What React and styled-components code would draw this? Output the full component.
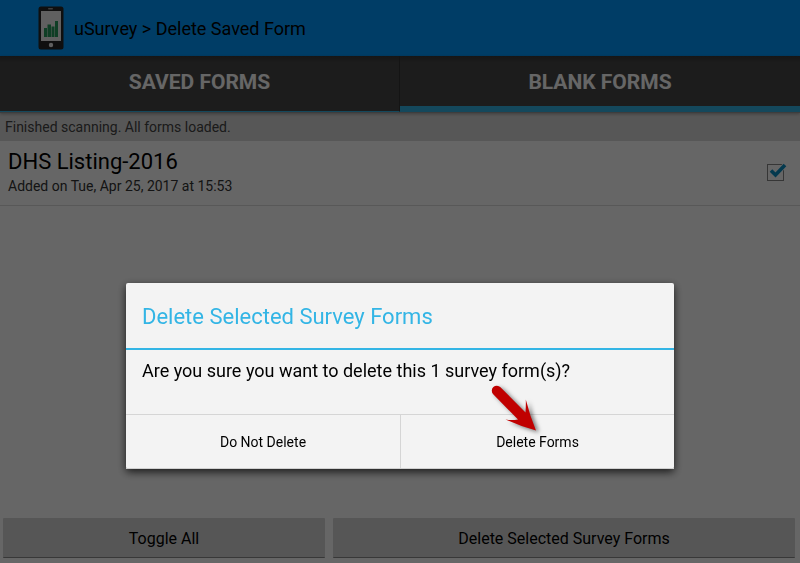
import React, { useState } from "react";
import styled, { createGlobalStyle } from "styled-components";

const GlobalStyle = createGlobalStyle`
  *, *::before, *::after { box-sizing: border-box; }
  body {
    margin: 0;
    background: #fff;
    color: #000;
    font-family: Roboto, "Liberation Sans", sans-serif;
  }
  button { font-family: inherit; color: inherit; cursor: pointer; }
`;

const Screen = styled.div`
  min-height: 100vh;
  display: flex;
  flex-direction: column;
`;

const ActionBar = styled.header`
  display: flex;
  align-items: center;
  gap: 10px;
  height: 56px;
  padding-left: 38px;
  background: #0099ff;
`;

const ScreenTitle = styled.h1`
  margin: 0;
  padding-top: 2px;
  font-size: 18px;
  line-height: 24px;
  font-weight: 400;
`;

const TabBar = styled.div`
  position: relative;
  display: grid;
  grid-template-columns: 1fr 1fr;
  height: 57px;
  background: linear-gradient(#383838, #464646 6px);
  border-bottom: 1px solid #999;
  box-shadow: 0 1px 3px rgba(0, 0, 0, 0.3);
`;

const Tab = styled.button`
  border: 0;
  border-bottom: ${(p) => (p.$active ? "6px" : "1px")} solid #33b5e5;
  border-right: ${(p) => (p.$active ? "0" : "1px solid #333")};
  padding: ${(p) => (p.$active ? "2px 0 0" : "2px 0 5px")};
  background: transparent;
  color: #fff;
  font-size: 21px;
  line-height: 26px;
  font-weight: 700;
`;

const Status = styled.p`
  margin: 0;
  padding: 4px 5px;
  background: #dadada;
  color: #444;
  font-size: 14px;
  line-height: 20px;
`;

const FormRow = styled.label`
  display: flex;
  align-items: center;
  justify-content: space-between;
  padding: 7px 11px 9px 8px;
  border-bottom: 1px solid #ddd;
`;

const FormName = styled.div`
  font-size: 22px;
  line-height: 28px;
`;

const FormDate = styled.div`
  color: #333;
  font-size: 14px;
  line-height: 20px;
`;

const CheckHolder = styled.span`
  position: relative;
  display: block;
  width: 22px;
  height: 18px;
`;

const CheckInput = styled.input`
  appearance: none;
  display: block;
  width: 17px;
  height: 17px;
  margin: 1px 0 0;
  border: 1px solid #888;
`;

const CheckMark = styled.svg`
  position: absolute;
  inset: 0;
  pointer-events: none;
`;

const Footer = styled.footer`
  display: grid;
  grid-template-columns: 322fr 462fr;
  gap: 8px;
  margin-top: auto;
  padding: 0 5px 5px 3px;
`;

const FooterButton = styled.button`
  height: 40px;
  padding: 2px 0 0;
  border: 0;
  border-bottom: 1px solid #8c8c8c;
  border-radius: 1px;
  background: #d8d8d8;
  font-size: 16px;
  line-height: 20px;
`;

const Scrim = styled.div`
  position: fixed;
  inset: 0;
  display: flex;
  align-items: flex-end;
  justify-content: center;
  padding: 0 16px 94px;
  background: rgba(0, 0, 0, 0.6);
`;

const Dialog = styled.section`
  position: relative;
  width: 100%;
  max-width: 548px;
  border-radius: 2px;
  background: #f3f3f3;
  box-shadow: 0 3px 9px rgba(0, 0, 0, 0.75);
`;

const DialogTitle = styled.h2`
  margin: 0;
  padding: 20px 16px 17px;
  border-bottom: 2px solid #33b5e5;
  color: #33b5e5;
  font-size: 22px;
  line-height: 28px;
  font-weight: 400;
`;

const DialogText = styled.p`
  margin: 0;
  padding: 9px 16px 31px;
  font-size: 18px;
  line-height: 24px;
`;

const DialogActions = styled.div`
  display: grid;
  grid-template-columns: 1fr 1fr;
  border-top: 1px solid #d5d5d5;
  border-bottom: 1px solid #d0d0d0;
`;

const DialogButton = styled.button`
  height: 53px;
  padding: 0;
  border: 0;
  background: transparent;
  font-size: 14px;
  line-height: 20px;

  & + & { border-left: 1px solid #d5d5d5; }
`;

const Pointer = styled.svg`
  position: absolute;
  right: 130px;
  top: 98px;
  overflow: visible;
  pointer-events: none;
  filter: drop-shadow(3px 2px 2px rgba(0, 0, 0, 0.5));
`;

function PhoneLogo() {
  return (
    <svg width="26" height="44" viewBox="0 0 26 44" aria-hidden="true">
      <rect x="0.5" y="0.5" width="25" height="43" rx="2.5" fill="#262626" />
      <rect x="10" y="2" width="5" height="1.5" rx="0.7" fill="#999" />
      <rect x="3" y="5" width="20" height="30" fill="#f0f0f0" />
      <path d="M6 22h3v9H6zM9.5 18.500h3.500V31H9.500zM13.500 20.500h3V31h-3zM17 15h3v16h-3z" fill="#279b5c" />
      <circle cx="13" cy="39" r="2.200" fill="#eee" />
    </svg>
  );
}

export default function App() {
  const [checked, setChecked] = useState(true);
  const [open, setOpen] = useState(true);
  const [tab, setTab] = useState("blank");

  return (
    <>
      <GlobalStyle />
      <Screen>
        <ActionBar>
          <PhoneLogo />
          <ScreenTitle>uSurvey &gt; Delete Saved Form</ScreenTitle>
        </ActionBar>
        <TabBar role="tablist">
          <Tab role="tab" aria-selected={tab === "saved"} $active={tab === "saved"} onClick={() => setTab("saved")}>
            SAVED FORMS
          </Tab>
          <Tab role="tab" aria-selected={tab === "blank"} $active={tab === "blank"} onClick={() => setTab("blank")}>
            BLANK FORMS
          </Tab>
        </TabBar>
        <Status>Finished scanning. All forms loaded.</Status>
        <FormRow>
          <div>
            <FormName>DHS Listing-2016</FormName>
            <FormDate>Added on Tue, Apr 25, 2017 at 15:53</FormDate>
          </div>
          <CheckHolder>
            <CheckInput type="checkbox" checked={checked} onChange={(e) => setChecked(e.target.checked)} />
            {checked && (
              <CheckMark width="22" height="18" viewBox="0 0 22 18" aria-hidden="true">
                <path d="M4 7.500L8.500 12L18 2" fill="none" stroke="#fff" strokeWidth="5" />
                <path d="M4 7.500L8.500 12L18 2" fill="none" stroke="#0a8fc4" strokeWidth="3.600" />
              </CheckMark>
            )}
          </CheckHolder>
        </FormRow>
        <Footer>
          <FooterButton onClick={() => setChecked(!checked)}>Toggle All</FooterButton>
          <FooterButton onClick={() => setOpen(true)}>Delete Selected Survey Forms</FooterButton>
        </Footer>
      </Screen>
      {open && (
        <Scrim>
          <Dialog role="dialog" aria-modal="true" aria-labelledby="dialog-title">
            <DialogTitle id="dialog-title">Delete Selected Survey Forms</DialogTitle>
            <DialogText>Are you sure you want to delete this 1 survey form(s)?</DialogText>
            <DialogActions>
              <DialogButton onClick={() => setOpen(false)}>Do Not Delete</DialogButton>
              <DialogButton onClick={() => setOpen(false)}>Delete Forms</DialogButton>
            </DialogActions>
            <Pointer width="56" height="52" viewBox="0 0 56 52" aria-hidden="true">
              <path
                d="M12.500 6.200L37.500 31.500Q38 24 37.800 18.500Q42 35 48 49.500Q32 45 17.500 38.500Q24 39.500 30 38.500L5.200 13.200A5 5 0 0 1 12.500 6.200Z"
                fill="#c00000"
              />
            </Pointer>
          </Dialog>
        </Scrim>
      )}
    </>
  );
}
